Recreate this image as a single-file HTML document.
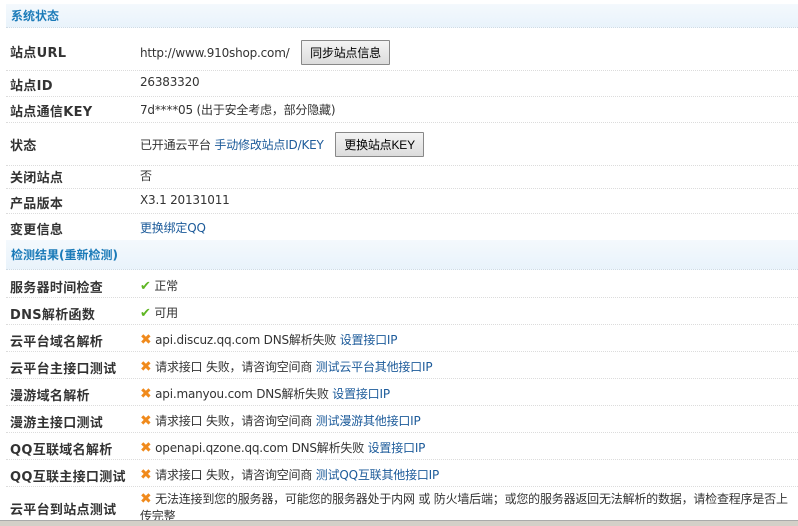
<!DOCTYPE html><html><head><meta charset="utf-8"><style>
body{margin:0;width:798px;height:525px;overflow:hidden;background:#fff;font:12px "DejaVu Sans","Noto Sans CJK SC",sans-serif;color:#333;position:relative}
.r{position:absolute;left:6px;right:0;border-bottom:1px dotted #dcdcdc}
.h{position:absolute;left:6px;right:0;background:linear-gradient(#f4f9fd,#e9f3fb);border-bottom:1px dotted #cfdbe5;color:#1a7ab8;font-weight:bold;padding-left:5px;box-sizing:border-box;font-size:12px}
.l{position:absolute;left:10px;font-weight:bold;color:#333;font-size:13px;letter-spacing:0.3px}
.v{position:absolute;left:140px;white-space:nowrap;letter-spacing:-0.2px}
a{color:#1d5b9a;text-decoration:none}
.btn{display:inline-block;border:1px solid #888;background:linear-gradient(#f4f4f4,#dcdcdc);padding:3px 8px;margin-left:8px;color:#000;border-radius:1px;font-family:"Liberation Sans","Noto Sans CJK SC",sans-serif}
.ok{color:#5fb623;font-weight:bold;font-size:13px}
.x{color:#f08a1c;font-weight:bold;font-size:14px}
.sb{position:absolute;left:0;right:0;top:520px;height:5px;background:#d4d0c8;border-top:1px solid #aaa}
</style></head><body>
<div class="h" style="top:4px;height:24px;line-height:24px">系统状态</div>
<div class="r" style="top:28px;height:42px"></div><span class="l" style="top:42px">站点URL</span><span class="v" style="top:40px">http://www.910shop.com/ <span class="btn">同步站点信息</span></span>
<div class="r" style="top:70px;height:26px"></div><span class="l" style="top:75px">站点ID</span><span class="v" style="top:75px">26383320</span>
<div class="r" style="top:96px;height:26px"></div><span class="l" style="top:101px">站点通信KEY</span><span class="v" style="top:101px">7d****05 (出于安全考虑，部分隐藏)</span>
<div class="r" style="top:122px;height:43px"></div><span class="l" style="top:135px">状态</span><span class="v" style="top:132px">已开通云平台 <a>手动修改站点ID/KEY</a> <span class="btn">更换站点KEY</span></span>
<div class="r" style="top:165px;height:23px"></div><span class="l" style="top:167px">关闭站点</span><span class="v" style="top:167px">否</span>
<div class="r" style="top:188px;height:25px"></div><span class="l" style="top:193px">产品版本</span><span class="v" style="top:193px">X3.1 20131011</span>
<div class="r" style="top:213px;height:27px"></div><span class="l" style="top:219px">变更信息</span><span class="v" style="top:219px"><a>更换绑定QQ</a></span>
<div class="h" style="top:240px;height:30px;line-height:30px">检测结果(重新检测)</div>
<div class="r" style="top:270px;height:27px"></div><span class="l" style="top:277px">服务器时间检查</span><span class="v" style="top:277px"><span class="ok">✔</span> 正常</span>
<div class="r" style="top:297px;height:27px"></div><span class="l" style="top:304px">DNS解析函数</span><span class="v" style="top:304px"><span class="ok">✔</span> 可用</span>
<div class="r" style="top:324px;height:27px"></div><span class="l" style="top:331px">云平台域名解析</span><span class="v" style="top:331px"><span class="x">✖</span> api.discuz.qq.com DNS解析失败 <a>设置接口IP</a></span>
<div class="r" style="top:351px;height:27px"></div><span class="l" style="top:358px">云平台主接口测试</span><span class="v" style="top:358px"><span class="x">✖</span> 请求接口 失败，请咨询空间商 <a>测试云平台其他接口IP</a></span>
<div class="r" style="top:378px;height:27px"></div><span class="l" style="top:385px">漫游域名解析</span><span class="v" style="top:385px"><span class="x">✖</span> api.manyou.com DNS解析失败 <a>设置接口IP</a></span>
<div class="r" style="top:405px;height:27px"></div><span class="l" style="top:412px">漫游主接口测试</span><span class="v" style="top:412px"><span class="x">✖</span> 请求接口 失败，请咨询空间商 <a>测试漫游其他接口IP</a></span>
<div class="r" style="top:432px;height:27px"></div><span class="l" style="top:439px">QQ互联域名解析</span><span class="v" style="top:439px"><span class="x">✖</span> openapi.qzone.qq.com DNS解析失败 <a>设置接口IP</a></span>
<div class="r" style="top:459px;height:27px"></div><span class="l" style="top:466px">QQ互联主接口测试</span><span class="v" style="top:466px"><span class="x">✖</span> 请求接口 失败，请咨询空间商 <a>测试QQ互联其他接口IP</a></span>
<span class="l" style="top:499px">云平台到站点测试</span><span class="v" style="top:491px;line-height:17px"><span class="x">✖</span> 无法连接到您的服务器，可能您的服务器处于内网 或 防火墙后端；或您的服务器返回无法解析的数据，请检查程序是否上<br>传完整</span>
<div class="sb"></div>
</body></html>
